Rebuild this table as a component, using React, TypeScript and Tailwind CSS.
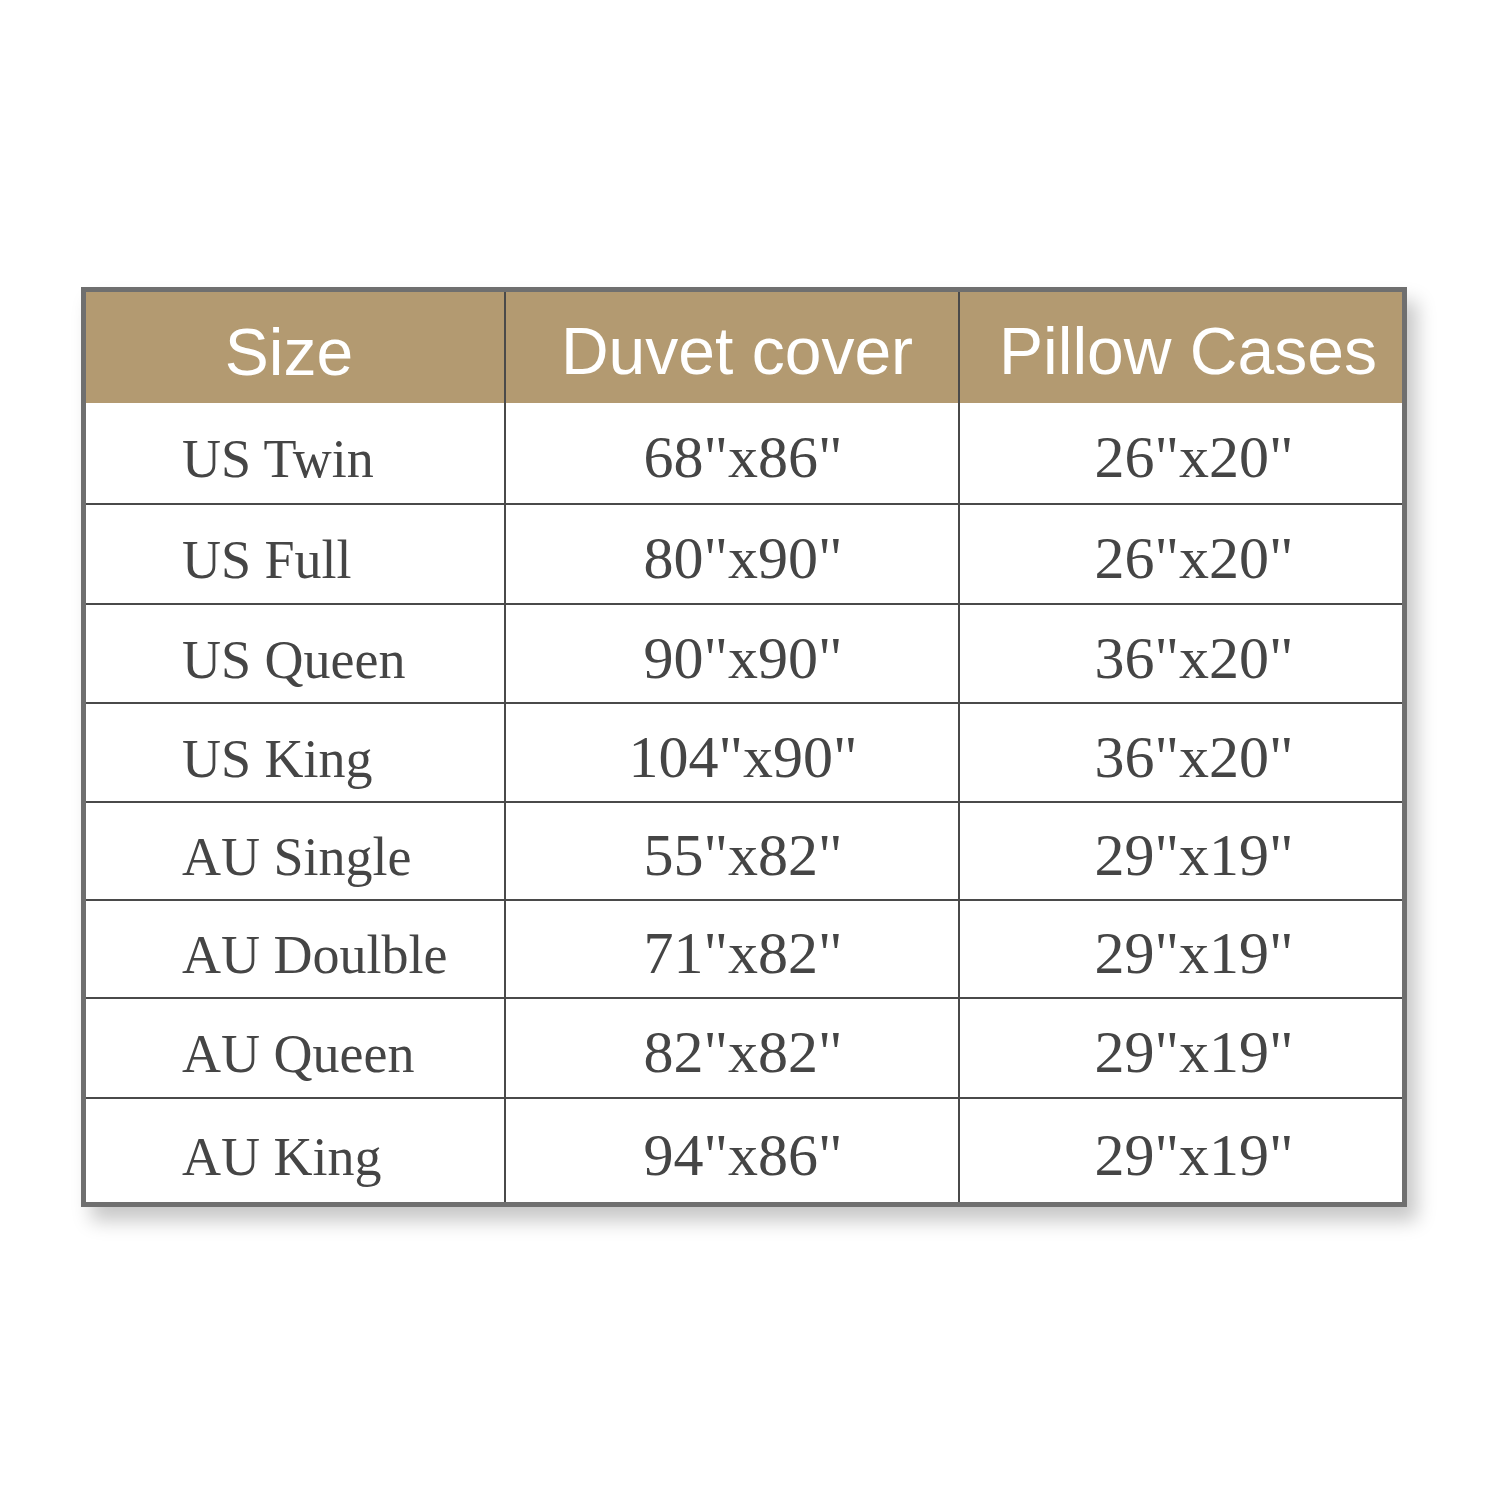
import React from "react";

const rows: { size: string; duvet: string; pillow: string; h: number }[] = [
  { size: "US Twin", duvet: '68"x86"', pillow: '26"x20"', h: 100 },
  { size: "US Full", duvet: '80"x90"', pillow: '26"x20"', h: 100 },
  { size: "US Queen", duvet: '90"x90"', pillow: '36"x20"', h: 99 },
  { size: "US King", duvet: '104"x90"', pillow: '36"x20"', h: 99 },
  { size: "AU Single", duvet: '55"x82"', pillow: '29"x19"', h: 98 },
  { size: "AU Doulble", duvet: '71"x82"', pillow: '29"x19"', h: 98 },
  { size: "AU Queen", duvet: '82"x82"', pillow: '29"x19"', h: 100 },
  { size: "AU King", duvet: '94"x86"', pillow: '29"x19"', h: 105 },
];

export default function App() {
  return (
    <div className="w-[1500px] h-[1500px] bg-white pt-[287px] pl-[81px]">
      <div className="w-[1326px] border-[5px] border-[#6f6f6f] bg-white shadow-[10px_14px_18px_rgba(0,0,0,0.22)]">
        <div className="flex h-[111px] bg-[#b39a71] text-white font-['Liberation_Sans',Arial,sans-serif] text-[66px] leading-none">
          <div className="w-[418px] flex items-center justify-center pr-[12px] pt-[8px]">Size</div>
          <div className="w-[2px] bg-[#4a4a4a]" />
          <div className="w-[452px] flex items-center justify-center pl-[10px] pt-[6px]">Duvet cover</div>
          <div className="w-[2px] bg-[#4a4a4a]" />
          <div className="w-[442px] flex items-center justify-center pl-[14px] pt-[6px]">Pillow Cases</div>
        </div>
        {rows.map((r, i) => (
          <div
            key={r.size}
            className={
              "flex text-[#454545] font-['Liberation_Serif','Times_New_Roman',serif] leading-none " +
              (i > 0 ? "border-t-2 border-[#4a4a4a]" : "")
            }
            style={{ height: r.h }}
          >
            <div className="w-[418px] flex items-center pl-[96px] pt-[12px] text-[54px]">{r.size}</div>
            <div className="w-[2px] bg-[#4a4a4a]" />
            <div className="w-[452px] flex items-center justify-center pl-[22px] pt-[8px] text-[60px]">{r.duvet}</div>
            <div className="w-[2px] bg-[#4a4a4a]" />
            <div className="w-[442px] flex items-center justify-center pl-[26px] pt-[8px] text-[60px]">{r.pillow}</div>
          </div>
        ))}
      </div>
    </div>
  );
}
